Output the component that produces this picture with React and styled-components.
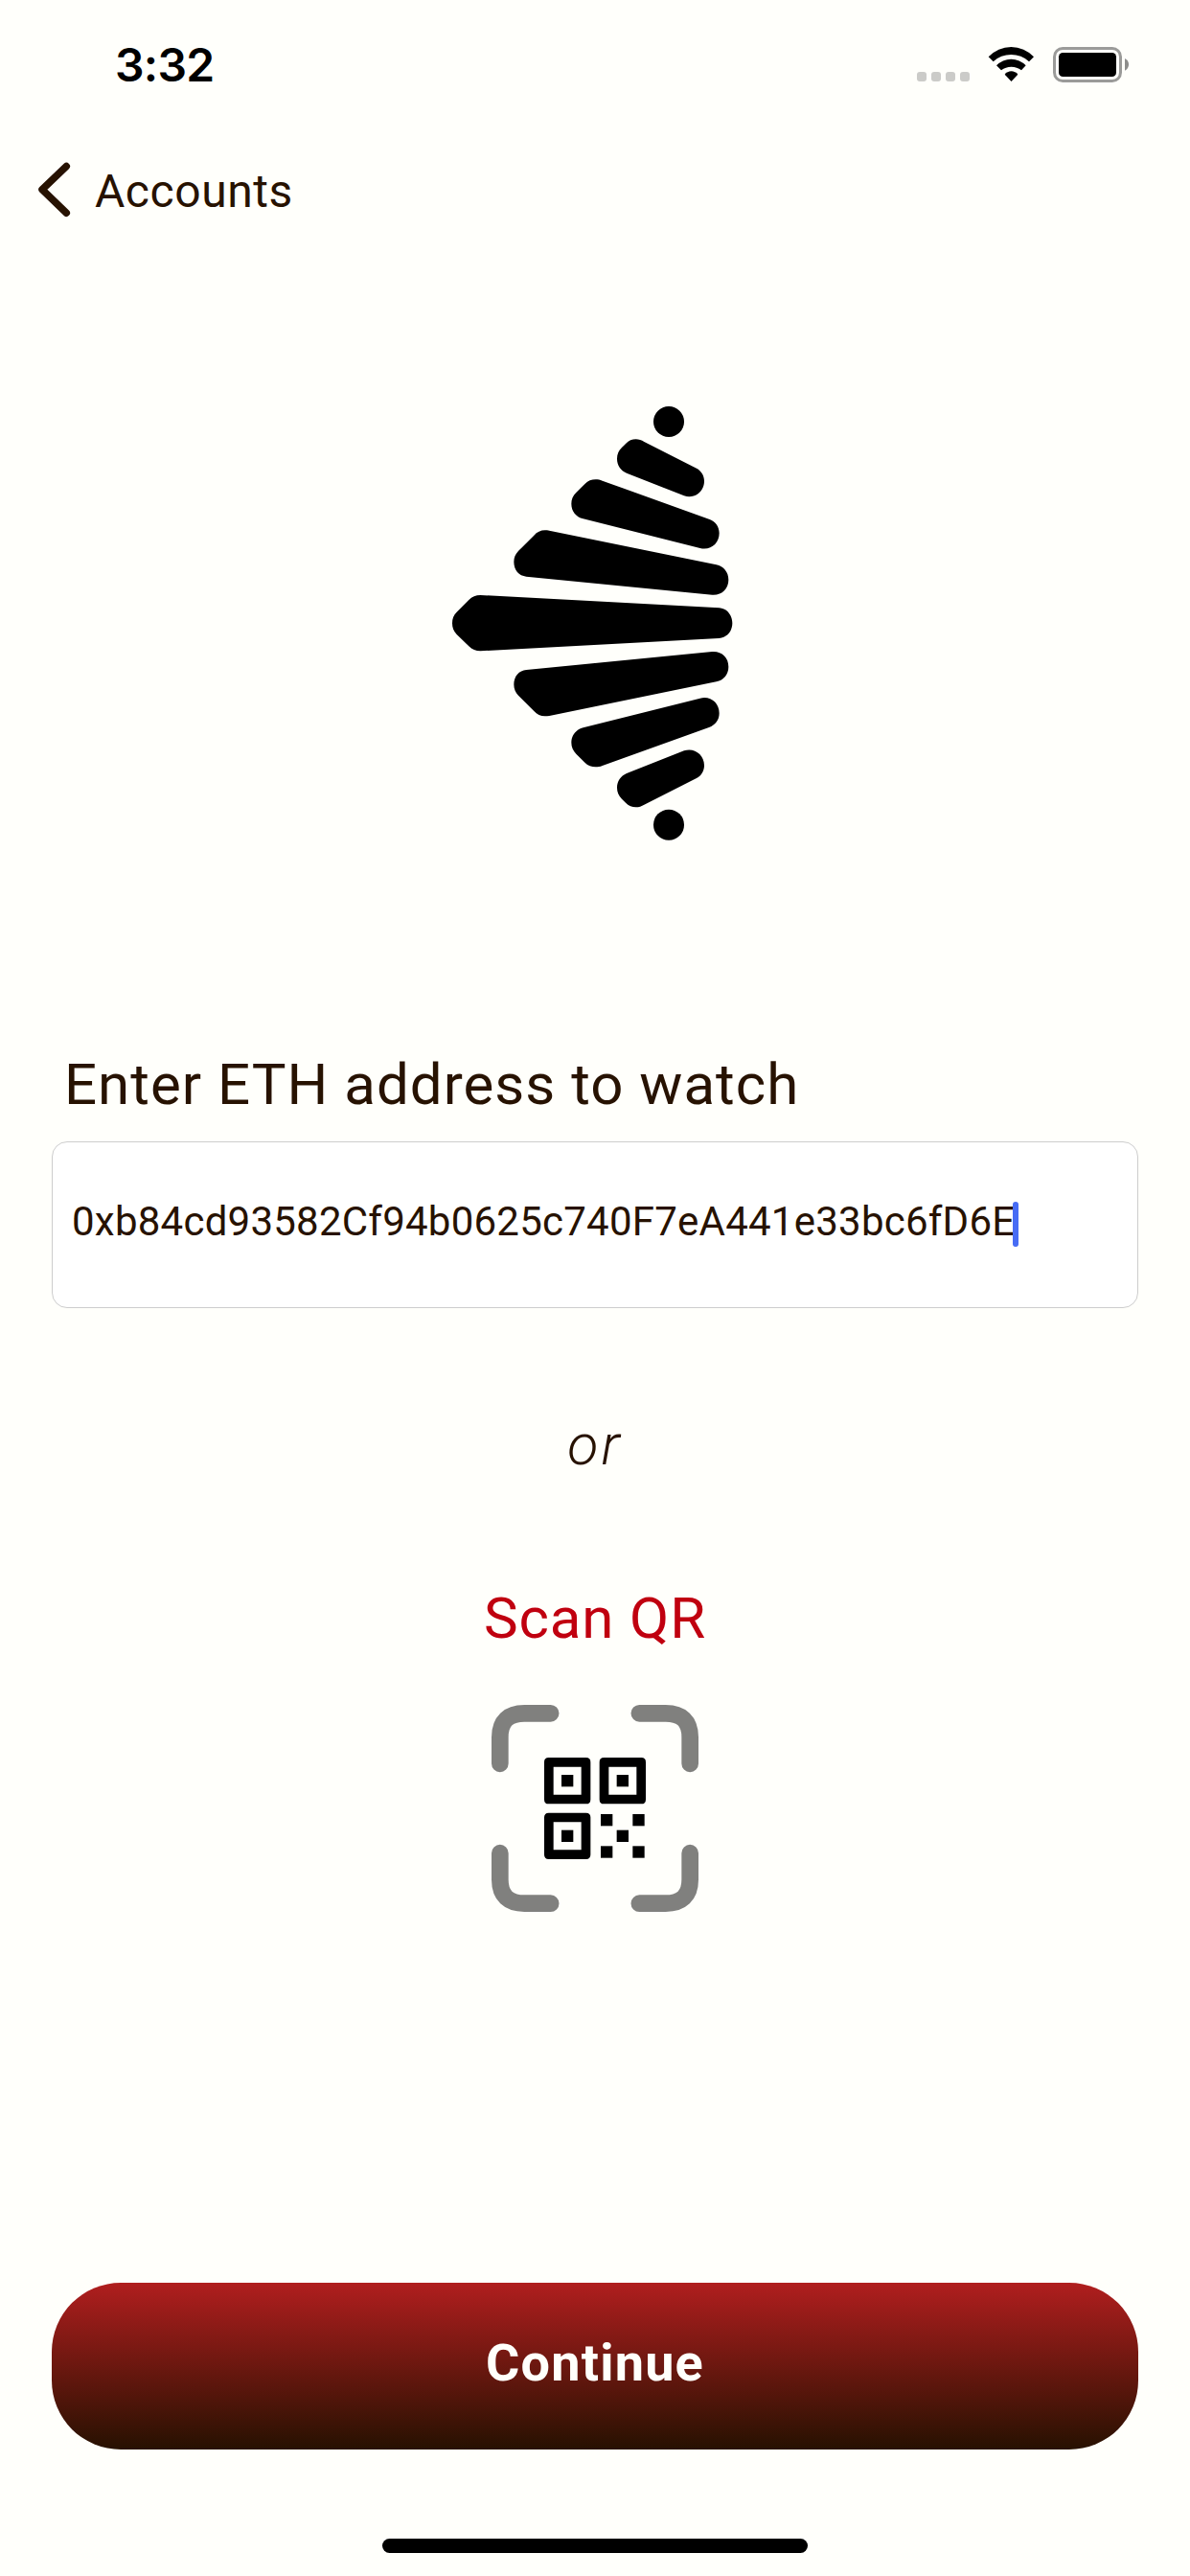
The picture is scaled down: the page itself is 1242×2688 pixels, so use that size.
import React from "react";
import styled, { createGlobalStyle } from "styled-components";

const ink = "#271201";
const paper = "#fffffb";
const textFont = `Roboto, "Liberation Sans", sans-serif`;

const GlobalStyle = createGlobalStyle`
  *, *::before, *::after { box-sizing: border-box; }
  body { margin: 0; background: ${paper}; }
`;

const Screen = styled.div`
  width: 1242px;
  height: 2688px;
  display: flex;
  flex-direction: column;
  overflow: hidden;
  background: ${paper};
  color: ${ink};
  font-family: ${textFont};
`;

const StatusBar = styled.header`
  height: 132px;
  flex: none;
  display: flex;
  justify-content: space-between;
  align-items: flex-start;
  padding: 48px 63px 0 120px;
`;

const Clock = styled.time`
  font: 600 48px/40px Inter, sans-serif;
  letter-spacing: -0.7px;
  color: #000;
`;

const StatusIcons = styled.div`
  display: flex;
  align-items: flex-start;
`;

const SignalDots = styled.div`
  display: flex;
  gap: 5px;
  margin: 27px 19px 0 0;
`;

const SignalDot = styled.i`
  width: 10px;
  height: 10px;
  border-radius: 3px;
  background: #cbcbc8;
`;

const WifiGlyph = styled.svg`
  display: block;
  width: 49px;
  height: 38px;
  margin-right: 19px;
`;

const BatteryGlyph = styled.svg`
  display: block;
  width: 80px;
  height: 38px;
`;

const BackLink = styled.button`
  height: 132px;
  flex: none;
  display: flex;
  align-items: flex-start;
  padding: 36px 0 0 39px;
  border: 0;
  background: none;
  color: inherit;
`;

const Chevron = styled.svg`
  display: block;
  width: 36px;
  height: 60px;
  margin-right: 24px;
`;

const BackLabel = styled.span`
  margin-top: 2px;
  font: 400 48px/60px ${textFont};
  letter-spacing: 0.55px;
`;

const Content = styled.main`
  flex: 1;
  display: flex;
  flex-direction: column;
  align-items: center;
  padding: 156px 54px 0;
`;

const Logo = styled.svg`
  display: block;
  width: 300px;
  height: 461px;
`;

const FieldLabel = styled.label`
  align-self: stretch;
  margin-top: 211px;
  padding-left: 13px;
  font-size: 60px;
  line-height: 80px;
  letter-spacing: 1.02px;
  white-space: nowrap;
`;

const AddressField = styled.div`
  align-self: stretch;
  height: 174px;
  margin-top: 19px;
  padding: 0 20px 6px;
  display: flex;
  align-items: center;
  border: 1px solid #cdcdcd;
  border-radius: 16px;
  background: #fff;
`;

const AddressText = styled.span`
  font-size: 42px;
  line-height: 50px;
  letter-spacing: 0.235px;
  white-space: nowrap;
`;

const Caret = styled.i`
  width: 6px;
  height: 47px;
  margin: 5px 0 0 -2px;
  border-radius: 3px;
  background: #476cf5;
`;

const OrText = styled.p`
  margin: 103px 0 0;
  font: italic 300 59px/80px ${textFont};
  letter-spacing: 3px;
`;

const ScanLink = styled.button`
  margin-top: 101px;
  padding: 0;
  border: 0;
  background: none;
  color: #c0000f;
  display: flex;
  flex-direction: column;
  align-items: center;
`;

const ScanLabel = styled.span`
  font: 400 60px/80px ${textFont};
  letter-spacing: 0.9px;
`;

const QrGlyph = styled.svg`
  display: block;
  width: 216px;
  height: 216px;
  margin-top: 50px;
`;

const Footer = styled.footer`
  height: 306px;
  flex: none;
  display: flex;
  flex-direction: column;
  align-items: center;
  padding: 0 54px;
`;

const ContinueButton = styled.button`
  width: 100%;
  height: 174px;
  padding: 0 0 6px;
  border: 0;
  border-radius: 72px;
  background: linear-gradient(#b01e1e, #271101);
  color: ${paper};
  font: 700 54px/70px ${textFont};
  letter-spacing: 1.2px;
`;

const HomeIndicator = styled.div`
  width: 444px;
  height: 15px;
  margin-top: 93px;
  border-radius: 8px;
  background: #000;
`;

const bars = [
  "M637 183L801 266C816 274 825 289 825 306C825 340 793 363 762 352L582 281C563 273 552 256 552 236C552 222 557 211 567 201L580 188C589 179 599 175 611 175C620 175 629 178 637 183Z",
  "M506 305L840 425C860 432 872 448 872 469C872 502 845 524 812 516L446 424C423 418 409 400 409 377C409 363 414 352 424 342L452 314C461 305 472 301 485 301C492 301 499 302 506 305Z",
  "M340 461L863 568C886 573 901 591 901 615C901 644 880 664 850 662L268 605C245 603 229 585 229 559C229 545 234 534 243 525L292 476C301 466 313 460 326 460C331 460 335 460 340 461Z",
];

function HalfLogo({ flipped }) {
  return (
    <g transform={flipped ? "matrix(1 0 0 -1 0 1502)" : undefined}>
      <circle cx="714" cy="120" r="48" />
      {bars.map((d) => (
        <path key={d} d={d} />
      ))}
    </g>
  );
}

function BrandLogo() {
  return (
    <Logo viewBox="33 60 900 1383" aria-hidden="true">
      <HalfLogo />
      <path d="M124 663L872 703C896 705 913 725 913 751C913 776 896 796 872 798L124 838C110 838 98 833 88 823L50 786C40 776 36 764 36 751C36 737 40 726 50 716L88 678C98 668 110 663 124 663Z" />
      <HalfLogo flipped />
    </Logo>
  );
}

function Finder({ x, y }) {
  return (
    <g transform={`translate(${x} ${y})`}>
      <path
        fillRule="evenodd"
        d="M14 0H131Q145 0 145 14V131Q145 145 131 145H14Q0 145 0 131V14Q0 0 14 0ZM29 29V116H116V29Z"
      />
      <rect x="54" y="54" width="37" height="37" />
    </g>
  );
}

const corners = [
  "",
  "matrix(-1 0 0 1 786 0)",
  "matrix(1 0 0 -1 0 762)",
  "matrix(-1 0 0 -1 786 762)",
];

const modules = [
  [411, 399],
  [511, 399],
  [461, 449],
  [411, 499],
  [511, 499],
];

function QrIcon() {
  return (
    <QrGlyph viewBox="69 57 648 648" fill="#000" aria-hidden="true">
      {corners.map((t) => (
        <path
          key={t}
          transform={t || undefined}
          d="M95.5 241V158C95.5 108 122 83.5 172 83.5H254"
          fill="none"
          stroke="#80807e"
          strokeWidth="53"
          strokeLinecap="round"
        />
      ))}
      <Finder x={234} y={222} />
      <Finder x={407} y={222} />
      <Finder x={234} y={395} />
      {modules.map(([x, y]) => (
        <rect key={`${x}-${y}`} x={x} y={y} width="37" height="37" />
      ))}
    </QrGlyph>
  );
}

export default function App() {
  return (
    <>
      <GlobalStyle />
      <Screen>
        <StatusBar>
          <Clock>3:32</Clock>
          <StatusIcons>
            <SignalDots>
              <SignalDot />
              <SignalDot />
              <SignalDot />
              <SignalDot />
            </SignalDots>
            <WifiGlyph viewBox="333 84 147 114">
              <path d="M335 118A97 97 0 0 1 477 118L462 133A82 82 0 0 0 350 133Z" />
              <path d="M360 145A63 63 0 0 1 452 145L438 160A51 51 0 0 0 375 160Z" />
              <path d="M386 173A26 26 0 0 1 427 173L406.500 195Z" />
            </WifiGlyph>
            <BatteryGlyph viewBox="537 84 240 114">
              <rect x="541.500" y="91.500" width="207" height="102" rx="26" fill="none" stroke="#9b9b99" strokeWidth="9" />
              <rect x="555" y="105" width="180" height="75" rx="13" />
              <path d="M762 123Q774 129 774 142Q774 155 762 161Z" fill="#8d8d8b" />
            </BatteryGlyph>
          </StatusIcons>
        </StatusBar>
        <BackLink>
          <Chevron viewBox="0 0 36 60" fill="none" stroke={ink} strokeWidth="7.500" strokeLinecap="round" strokeLinejoin="round">
            <path d="M30.300 5.500L5 29.800L30.300 54.200" />
          </Chevron>
          <BackLabel>Accounts</BackLabel>
        </BackLink>
        <Content>
          <BrandLogo />
          <FieldLabel>Enter ETH address to watch</FieldLabel>
          <AddressField>
            <AddressText>0xb84cd93582Cf94b0625c740F7eA441e33bc6fD6E</AddressText>
            <Caret />
          </AddressField>
          <OrText>or</OrText>
          <ScanLink>
            <ScanLabel>Scan QR</ScanLabel>
            <QrIcon />
          </ScanLink>
        </Content>
        <Footer>
          <ContinueButton>Continue</ContinueButton>
          <HomeIndicator />
        </Footer>
      </Screen>
    </>
  );
}
